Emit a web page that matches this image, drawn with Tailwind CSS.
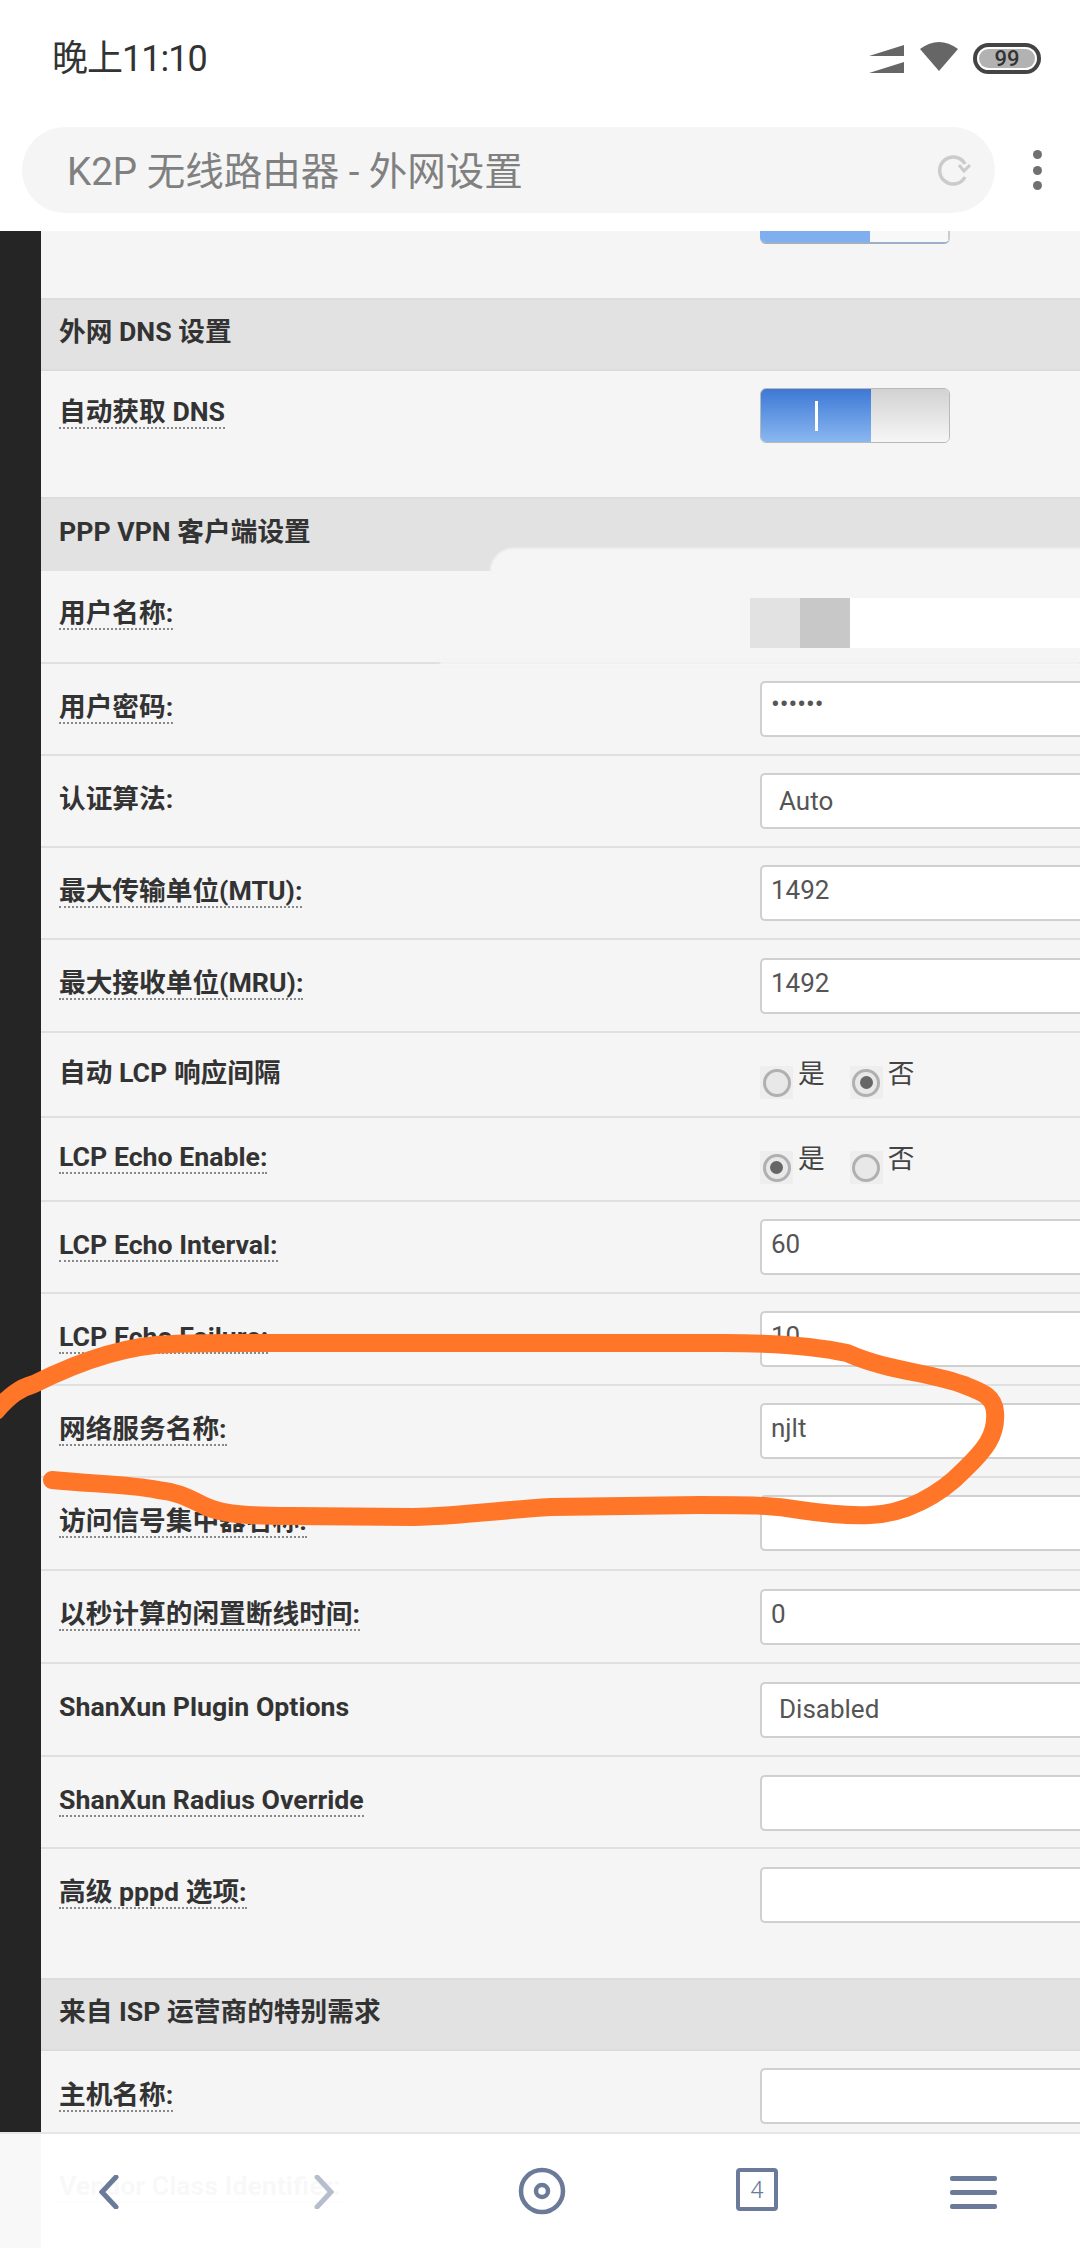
<!DOCTYPE html>
<html lang="zh">
<head>
  <meta charset="UTF-8" />
  <meta name="viewport" content="width=device-width, initial-scale=1.0" />
  <title>K2P 无线路由器 - 外网设置</title>
  <script src="https://cdn.jsdelivr.net/npm/@tailwindcss/browser@4"></script>
</head>
<body class="bg-white font-[Roboto,'Noto_Sans_CJK_SC',sans-serif]">
  <div class="relative w-[1080px] h-[2248px] overflow-hidden bg-white">

    <!-- status bar -->
    <div class="h-[127px] flex items-start justify-between">
      <span class="ml-[52px] mt-[39px] text-[36px] leading-[40px] tracking-[-1px] text-[#333]">晚上11:10</span>
      <div class="flex items-start mr-[39px] mt-[42px]">
        <svg class="w-[36px] h-[28px] mt-[3px]" viewBox="0 0 36 28" fill="#666"><path d="M0 11 35 0V11ZM0 28 35 17V28Z"/></svg>
        <svg class="w-[38px] h-[30px] ml-[15px]" viewBox="0 0 38 30" fill="#666"><path d="M0 7Q19-7 38 7L19 29Z"/></svg>
        <div class="ml-[15px] w-[68px] h-[31px] mt-[1px] rounded-full border-4 border-[#444] p-[2px]">
          <div class="h-full rounded-full bg-[#b2b2b2] flex items-center justify-center text-[22px] leading-none font-medium text-[#333]">99</div>
        </div>
      </div>
    </div>

    <!-- url bar -->
    <div class="h-[104px] flex items-start pl-[22px]">
      <div class="w-[973px] h-[86px] rounded-[43px] bg-[#f5f5f5] flex items-center justify-between pl-[45px] pr-[23px]">
        <span class="mt-[4px] text-[38.5px] leading-[46px] text-[#808080]">K2P 无线路由器 - 外网设置</span>
        <svg class="w-[36px] h-[36px] mt-[1px]" viewBox="0 0 36 36" fill="none" stroke="#cbcbcb" stroke-width="3.5"><path d="M29 24A13.5 13.5 0 1 1 29 11"/><path d="M34 12 28 18 23 12" stroke-width="3"/></svg>
      </div>
      <div class="ml-[38px] mt-[23px] flex flex-col gap-[6.5px]">
        <span class="w-[9px] h-[9px] rounded-full bg-[#707070]"></span>
        <span class="w-[9px] h-[9px] rounded-full bg-[#707070]"></span>
        <span class="w-[9px] h-[9px] rounded-full bg-[#707070]"></span>
      </div>
    </div>

    <!-- page -->
    <div class="flex">
      <div class="w-[41px] shrink-0 bg-[#252525]"></div>
      <div class="flex-1 bg-[#f5f5f5] text-[26.7px] leading-[30px] text-[#333]">

        <div class="h-[67px] overflow-hidden pl-[719px]">
          <div class="w-[190px] h-[13px] flex rounded-b-[6px] overflow-hidden border-b-2 border-[#9db0c8]">
            <div class="w-[110px] bg-[#7fafee]"></div>
            <div class="flex-1 bg-[#f8f8f8] border-r-2 border-[#ccc]"></div>
          </div>
        </div>

        <div class="h-[73px] bg-[#e2e2e2] border-y-2 border-[#dcdcdc] pl-[18px] pb-[5px] flex items-center font-bold">外网 DNS 设置</div>

        <div class="h-[126px] flex items-start pl-[18px]">
          <div class="w-[701px] mt-[26px]"><span class="border-b-2 border-dotted border-[#888] font-bold inline-block">自动获取 DNS</span></div>
          <div class="mt-[17px] w-[190px] h-[55px] flex rounded-[6px] overflow-hidden border border-[#b9b9b9]">
            <div class="w-[110px] bg-linear-to-b from-[#3d78d4] to-[#8ab7f1] flex items-center justify-center"><span class="w-[3px] h-[30px] bg-white"></span></div>
            <div class="flex-1 bg-linear-to-b from-[#d2d2d2] to-[#f6f6f6]"></div>
          </div>
        </div>

        <div class="h-[74px] bg-[#e2e2e2] border-t-2 border-[#dcdcdc] pl-[18px] pb-[7px] flex items-center font-bold">PPP VPN 客户端设置</div>

        <div class="h-[93px] flex items-start pl-[18px] border-b-2 border-[#e0e0e0]">
          <div class="w-[691px] mt-[27px]"><span class="border-b-2 border-dotted border-[#888] font-bold inline-block">用户名称:</span></div>
          <div class="mt-[27px] flex-1 h-[50px] flex">
            <div class="w-[50px] bg-[#e2e2e2]"></div>
            <div class="w-[50px] bg-[#c8c8c8]"></div>
            <div class="flex-1 bg-white"></div>
          </div>
        </div>

        <div class="h-[92px] flex items-start pl-[18px] border-b-2 border-[#e0e0e0]">
          <div class="w-[701px] mt-[28px]"><span class="border-b-2 border-dotted border-[#888] font-bold inline-block">用户密码:</span></div>
          <div class="mt-[17px] flex-1 h-[56px] bg-white border-2 border-r-0 border-[#d0d0d0] rounded-l-[5px] pl-[9px] text-[26px] leading-[42px] text-[#555]">••••••</div>
        </div>

        <div class="h-[92px] flex items-start pl-[18px] border-b-2 border-[#e0e0e0]">
          <div class="w-[701px] mt-[28px]"><span class="border-b-2 border-transparent font-bold inline-block">认证算法:</span></div>
          <div class="mt-[17px] flex-1 h-[56px] bg-white border-2 border-r-0 border-[#d0d0d0] rounded-l-[5px] pl-[17px] text-[26px] leading-[52px] text-[#555]">Auto</div>
        </div>

        <div class="h-[92px] flex items-start pl-[18px] border-b-2 border-[#e0e0e0]">
          <div class="w-[701px] mt-[28px]"><span class="border-b-2 border-dotted border-[#888] font-bold inline-block">最大传输单位(MTU):</span></div>
          <div class="mt-[17px] flex-1 h-[56px] bg-white border-2 border-r-0 border-[#d0d0d0] rounded-l-[5px] pl-[9px] text-[26px] leading-[46px] text-[#555]">1492</div>
        </div>

        <div class="h-[93px] flex items-start pl-[18px] border-b-2 border-[#e0e0e0]">
          <div class="w-[701px] mt-[28px]"><span class="border-b-2 border-dotted border-[#888] font-bold inline-block">最大接收单位(MRU):</span></div>
          <div class="mt-[18px] flex-1 h-[56px] bg-white border-2 border-r-0 border-[#d0d0d0] rounded-l-[5px] pl-[9px] text-[26px] leading-[46px] text-[#555]">1492</div>
        </div>

        <div class="h-[85px] flex items-start pl-[18px] border-b-2 border-[#e0e0e0]">
          <div class="w-[701px] mt-[25px]"><span class="border-b-2 border-transparent font-bold inline-block">自动 LCP 响应间隔</span></div>
          <div class="mt-[33px] flex items-start">
            <span class="w-[33px] h-[33px] bg-[#eee] flex items-center justify-center"><span class="w-[28px] h-[28px] rounded-full border-[3px] border-[#b0b0b0] bg-[#e8e8e8]"></span></span>
            <span class="ml-[5px] -mt-[7px] text-[#444]">是</span>
            <span class="ml-[25px] w-[33px] h-[33px] bg-[#eee] flex items-center justify-center"><span class="w-[28px] h-[28px] rounded-full border-[3px] border-[#b0b0b0] bg-[#e8e8e8] flex items-center justify-center"><span class="w-[13px] h-[13px] rounded-full bg-[#666]"></span></span></span>
            <span class="ml-[5px] -mt-[7px] text-[#444]">否</span>
          </div>
        </div>

        <div class="h-[84px] flex items-start pl-[18px] border-b-2 border-[#e0e0e0]">
          <div class="w-[701px] mt-[24px]"><span class="border-b-2 border-dotted border-[#888] font-bold inline-block">LCP Echo Enable:</span></div>
          <div class="mt-[33px] flex items-start">
            <span class="w-[33px] h-[33px] bg-[#eee] flex items-center justify-center"><span class="w-[28px] h-[28px] rounded-full border-[3px] border-[#b0b0b0] bg-[#e8e8e8] flex items-center justify-center"><span class="w-[13px] h-[13px] rounded-full bg-[#666]"></span></span></span>
            <span class="ml-[5px] -mt-[7px] text-[#444]">是</span>
            <span class="ml-[25px] w-[33px] h-[33px] bg-[#eee] flex items-center justify-center"><span class="w-[28px] h-[28px] rounded-full border-[3px] border-[#b0b0b0] bg-[#e8e8e8]"></span></span>
            <span class="ml-[5px] -mt-[7px] text-[#444]">否</span>
          </div>
        </div>

        <div class="h-[92px] flex items-start pl-[18px] border-b-2 border-[#e0e0e0]">
          <div class="w-[701px] mt-[28px]"><span class="border-b-2 border-dotted border-[#888] font-bold inline-block">LCP Echo Interval:</span></div>
          <div class="mt-[17px] flex-1 h-[56px] bg-white border-2 border-r-0 border-[#d0d0d0] rounded-l-[5px] pl-[9px] text-[26px] leading-[46px] text-[#555]">60</div>
        </div>

        <div class="h-[92px] flex items-start pl-[18px] border-b-2 border-[#e0e0e0]">
          <div class="w-[701px] mt-[28px]"><span class="border-b-2 border-dotted border-[#888] font-bold inline-block">LCP Echo Failure:</span></div>
          <div class="mt-[17px] flex-1 h-[56px] bg-white border-2 border-r-0 border-[#d0d0d0] rounded-l-[5px] pl-[9px] text-[26px] leading-[46px] text-[#555]">10</div>
        </div>

        <div class="h-[92px] flex items-start pl-[18px] border-b-2 border-[#e0e0e0]">
          <div class="w-[701px] mt-[28px]"><span class="border-b-2 border-dotted border-[#888] font-bold inline-block">网络服务名称:</span></div>
          <div class="mt-[17px] flex-1 h-[56px] bg-white border-2 border-r-0 border-[#d0d0d0] rounded-l-[5px] pl-[9px] text-[26px] leading-[46px] text-[#555]">njlt</div>
        </div>

        <div class="h-[93px] flex items-start pl-[18px] border-b-2 border-[#e0e0e0]">
          <div class="w-[701px] mt-[28px]"><span class="border-b-2 border-dotted border-[#888] font-bold inline-block">访问信号集中器名称:</span></div>
          <div class="mt-[17px] flex-1 h-[56px] bg-white border-2 border-r-0 border-[#d0d0d0] rounded-l-[5px]"></div>
        </div>

        <div class="h-[93px] flex items-start pl-[18px] border-b-2 border-[#e0e0e0]">
          <div class="w-[701px] mt-[28px]"><span class="border-b-2 border-dotted border-[#888] font-bold inline-block">以秒计算的闲置断线时间:</span></div>
          <div class="mt-[18px] flex-1 h-[56px] bg-white border-2 border-r-0 border-[#d0d0d0] rounded-l-[5px] pl-[9px] text-[26px] leading-[46px] text-[#555]">0</div>
        </div>

        <div class="h-[93px] flex items-start pl-[18px] border-b-2 border-[#e0e0e0]">
          <div class="w-[701px] mt-[28px]"><span class="border-b-2 border-transparent font-bold inline-block">ShanXun Plugin Options</span></div>
          <div class="mt-[18px] flex-1 h-[56px] bg-white border-2 border-r-0 border-[#d0d0d0] rounded-l-[5px] pl-[17px] text-[26px] leading-[50px] text-[#555]">Disabled</div>
        </div>

        <div class="h-[92px] flex items-start pl-[18px] border-b-2 border-[#e0e0e0]">
          <div class="w-[701px] mt-[28px]"><span class="border-b-2 border-dotted border-[#888] font-bold inline-block">ShanXun Radius Override</span></div>
          <div class="mt-[18px] flex-1 h-[56px] bg-white border-2 border-r-0 border-[#d0d0d0] rounded-l-[5px]"></div>
        </div>

        <div class="h-[129px] flex items-start pl-[18px]">
          <div class="w-[701px] mt-[28px]"><span class="border-b-2 border-dotted border-[#888] font-bold inline-block">高级 pppd 选项:</span></div>
          <div class="mt-[18px] flex-1 h-[56px] bg-white border-2 border-r-0 border-[#d0d0d0] rounded-l-[5px]"></div>
        </div>

        <div class="h-[73px] bg-[#e2e2e2] border-y-2 border-[#dcdcdc] pl-[18px] pb-[5px] flex items-center font-bold">来自 ISP 运营商的特别需求</div>

        <div class="h-[92px] flex items-start pl-[18px]">
          <div class="w-[701px] mt-[29px]"><span class="border-b-2 border-dotted border-[#888] font-bold inline-block">主机名称:</span></div>
          <div class="mt-[17px] flex-1 h-[56px] bg-white border-2 border-r-0 border-[#d0d0d0] rounded-l-[5px]"></div>
        </div>

        <div class="h-[105px] flex items-start pl-[18px]">
          <div class="w-[701px] mt-[28px]"><span class="border-b-2 border-dotted border-[#888] font-bold inline-block">Vendor Class Identifier:</span></div>
        </div>
      </div>
    </div>

    <!-- blur left over the user name in the photo -->
    <div class="absolute left-[490px] top-[548px] w-[600px] h-[24px] bg-[#f5f5f5] rounded-tl-[30px] blur-[1px]"></div>
    <div class="absolute left-[440px] top-[661px] w-[640px] h-[5px] bg-[#f5f5f5]/80 blur-[1px]"></div>

    <!-- bottom bar -->
    <div class="absolute left-0 bottom-0 w-full h-[116px] bg-white/[.97] border-t-2 border-[#e6e6e6] flex items-start">
      <svg class="ml-[99px] mt-[41px] w-[20px] h-[34px]" viewBox="0 0 20 34" fill="none" stroke="#6b7a99" stroke-width="5" stroke-linecap="round"><path d="M17 2 3 17 17 32"/></svg>
      <svg class="ml-[195px] mt-[41px] w-[20px] h-[34px]" viewBox="0 0 20 34" fill="none" stroke="#b6bdcc" stroke-width="5" stroke-linecap="round"><path d="M3 2 17 17 3 32"/></svg>
      <svg class="ml-[184px] mt-[33px] w-[48px] h-[48px]" viewBox="0 0 48 48" fill="none" stroke="#6b7a99" stroke-width="4.5"><circle cx="24" cy="24" r="21"/><circle cx="24" cy="24" r="6"/></svg>
      <div class="ml-[170px] mt-[34px] w-[42px] h-[43px] border-4 border-[#6b7a99] rounded-[4px] flex items-center justify-center text-[24px] leading-none font-light text-[#6b7a99]">4</div>
      <div class="ml-[172px] mt-[42px] flex flex-col gap-[9px]">
        <span class="w-[47px] h-[5px] rounded-[2px] bg-[#6b7a99]"></span>
        <span class="w-[47px] h-[5px] rounded-[2px] bg-[#6b7a99]"></span>
        <span class="w-[47px] h-[5px] rounded-[2px] bg-[#6b7a99]"></span>
      </div>
    </div>

    <!-- hand drawn circle on the photo -->
    <svg class="absolute left-0 top-0 w-[1080px] h-[2248px] pointer-events-none" viewBox="0 0 1080 2248" fill="none" stroke="#ff7629" stroke-width="18" stroke-linecap="round" stroke-linejoin="round">
      <path d="M-4 1411C10 1395 20 1388 34 1384C70 1366 120 1345 172 1344C190 1343 210 1343 240 1343L723 1343C770 1343 810 1345 847 1353C890 1372 930 1372 964 1385C982 1392 994 1396 995 1412C997 1435 985 1450 964 1470C940 1495 905 1514 870 1515C845 1516 820 1513 800 1510C770 1505 750 1505 700 1505L551 1507C500 1510 460 1516 413 1517L290 1516C255 1516 225 1515 207 1507C190 1499 180 1492 158 1490C130 1484 90 1484 52 1480"/>
    </svg>
  </div>
</body>
</html>
